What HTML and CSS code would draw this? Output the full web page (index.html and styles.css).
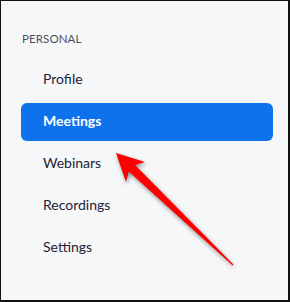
FILE: index.html
```html
<!DOCTYPE html>
<html>
<head>
<meta charset="utf-8">
<link rel="stylesheet" href="styles.css">
</head>
<body>
<div class="frame">
  <nav class="menu">
    <div class="section-title">PERSONAL</div>
    <ul class="items">
      <li class="item">Profile</li>
      <li class="item active">Meetings</li>
      <li class="item">Webinars</li>
      <li class="item">Recordings</li>
      <li class="item">Settings</li>
    </ul>
  </nav>
  <svg class="arrow" width="290" height="302" viewBox="0 0 290 302">
    <polygon points="116,153 145,162 135,164.9 233.4,264.6 232.6,265.4 128.8,171.5 126,182" fill="#ff0000"/>
  </svg>
</div>
</body>
</html>
```
FILE: styles.css
```css
html, body {
  margin: 0;
  padding: 0;
  background: #f6f7f9;
}
.frame {
  position: relative;
  width: 290px;
  height: 302px;
  box-sizing: border-box;
  border-style: solid;
  border-color: #111;
  border-width: 1px 2px 2px 1px;
  background: #f6f7f9;
  overflow: hidden;
}
.menu {
  padding: 31px 15px 0 20px;
  font-family: Lato, "Open Sans", sans-serif;
}
.section-title {
  font-size: 11.5px;
  line-height: 13px;
  color: #4f4f5c;
  letter-spacing: 0.1px;
  padding-left: 1px;
  height: 16px;
}
.items {
  list-style: none;
  margin: 0;
  padding: 0;
  display: flex;
  flex-direction: column;
  gap: 4px;
  margin-top: 13px;
}
.item {
  height: 38px;
  line-height: 36px;
  padding-left: 22px;
  font-size: 14px;
  color: #232333;
  border-radius: 6px;
}
.item.active {
  background: #0e72ed;
  color: #fff;
  font-weight: bold;
}
.arrow {
  position: absolute;
  left: -1px;
  top: -1px;
  filter: drop-shadow(1px 2px 2px rgba(0,0,0,0.45));
}
```
